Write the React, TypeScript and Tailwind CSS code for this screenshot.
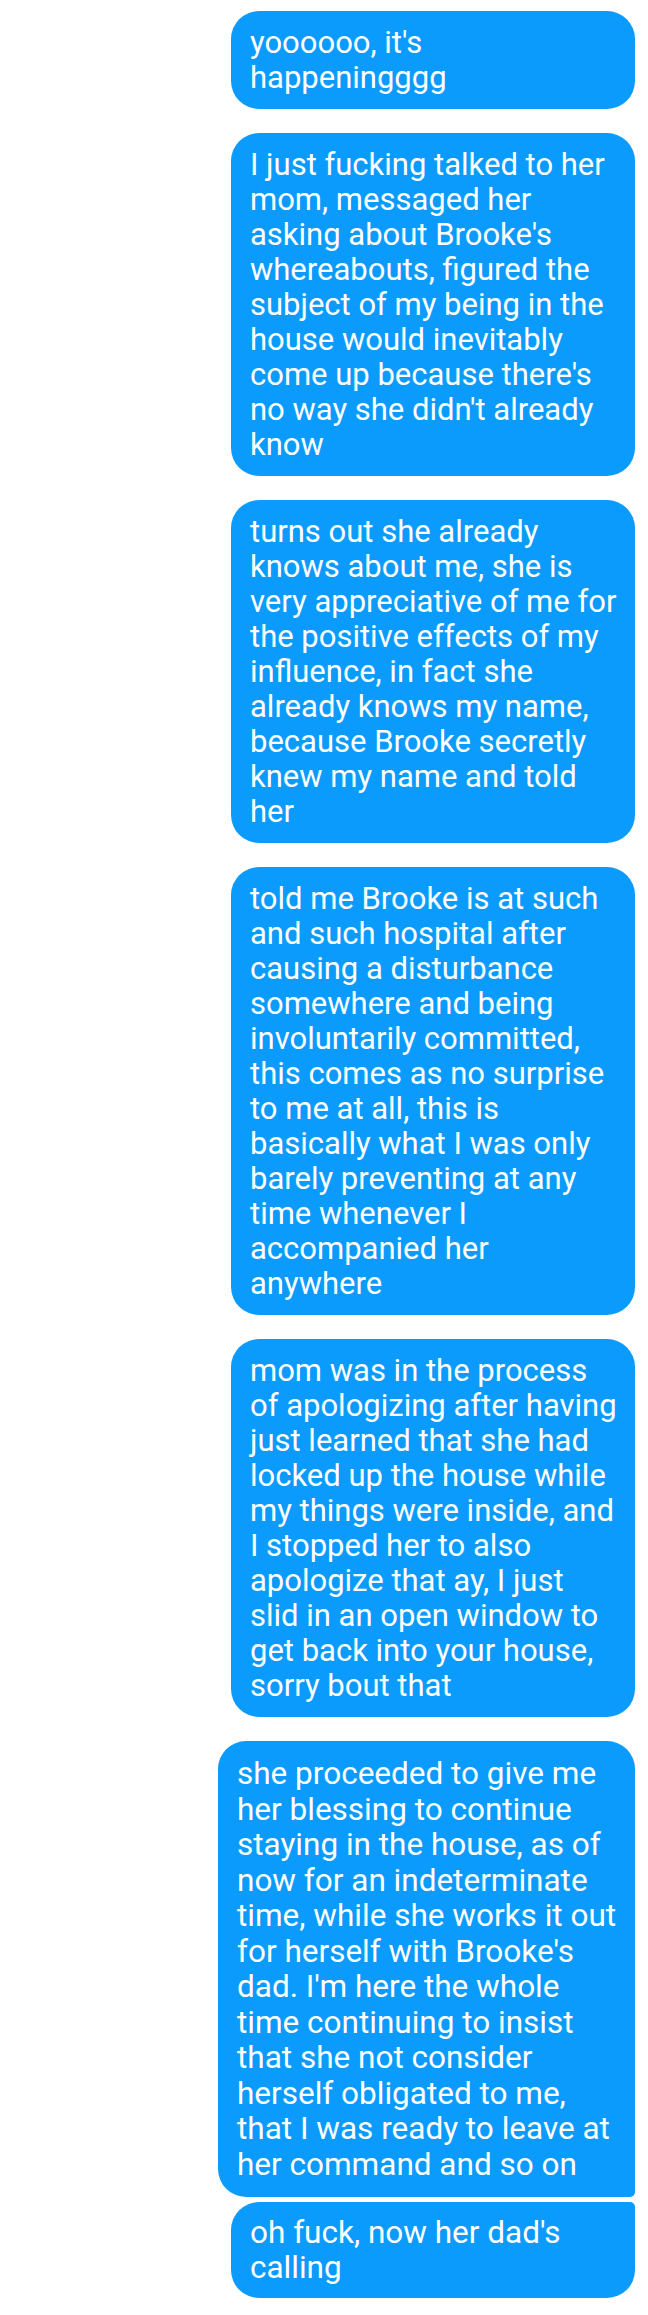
type Bubble = {
  lines: string[];
  wide?: boolean;
  joinedBelow?: boolean;
  joinedAbove?: boolean;
};

const bubbles: Bubble[] = [
  { lines: ["yoooooo, it's", "happeningggg"] },
  {
    lines: [
      "I just fucking talked to her",
      "mom, messaged her",
      "asking about Brooke's",
      "whereabouts, figured the",
      "subject of my being in the",
      "house would inevitably",
      "come up because there's",
      "no way she didn't already",
      "know",
    ],
  },
  {
    lines: [
      "turns out she already",
      "knows about me, she is",
      "very appreciative of me for",
      "the positive effects of my",
      "influence, in fact she",
      "already knows my name,",
      "because Brooke secretly",
      "knew my name and told",
      "her",
    ],
  },
  {
    lines: [
      "told me Brooke is at such",
      "and such hospital after",
      "causing a disturbance",
      "somewhere and being",
      "involuntarily committed,",
      "this comes as no surprise",
      "to me at all, this is",
      "basically what I was only",
      "barely preventing at any",
      "time whenever I",
      "accompanied her",
      "anywhere",
    ],
  },
  {
    lines: [
      "mom was in the process",
      "of apologizing after having",
      "just learned that she had",
      "locked up the house while",
      "my things were inside, and",
      "I stopped her to also",
      "apologize that ay, I just",
      "slid in an open window to",
      "get back into your house,",
      "sorry bout that",
    ],
  },
  {
    lines: [
      "she proceeded to give me",
      "her blessing to continue",
      "staying in the house, as of",
      "now for an indeterminate",
      "time, while she works it out",
      "for herself with Brooke's",
      "dad. I'm here the whole",
      "time continuing to insist",
      "that she not consider",
      "herself obligated to me,",
      "that I was ready to leave at",
      "her command and so on",
    ],
    wide: true,
    joinedBelow: true,
  },
  { lines: ["oh fuck, now her dad's", "calling"], joinedAbove: true },
];

function MessageBubble({ b }: { b: Bubble }) {
  const shape = b.joinedBelow
    ? "rounded-[28px] rounded-br-[5px]"
    : b.joinedAbove
      ? "rounded-[28px] rounded-tr-[5px] py-[13px] text-[31.5px]"
      : "rounded-[28px] py-[14px] text-[31px]";
  return (
    <div
      className={`${b.wide ? "w-[417px] py-[15px] text-[31.5px] leading-[35.5px]" : "w-[404px] leading-[35px]"} ${shape} bg-[#0a9bfd] pl-[19px] text-white`}
    >
      {b.lines.map((l, i) => (
        <div key={i} className="whitespace-nowrap">
          {l}
        </div>
      ))}
    </div>
  );
}

export default function App() {
  return (
    <div
      className="flex min-h-[2315px] w-[648px] flex-col items-end bg-white pt-[11px] pr-[13px]"
      style={{ fontFamily: "Roboto, 'Noto Sans', sans-serif" }}
    >
      {bubbles.map((b, i) => (
        <div key={i} className={i === 0 ? "" : b.joinedAbove ? "mt-[5px]" : "mt-[24px]"}>
          <MessageBubble b={b} />
        </div>
      ))}
    </div>
  );
}
